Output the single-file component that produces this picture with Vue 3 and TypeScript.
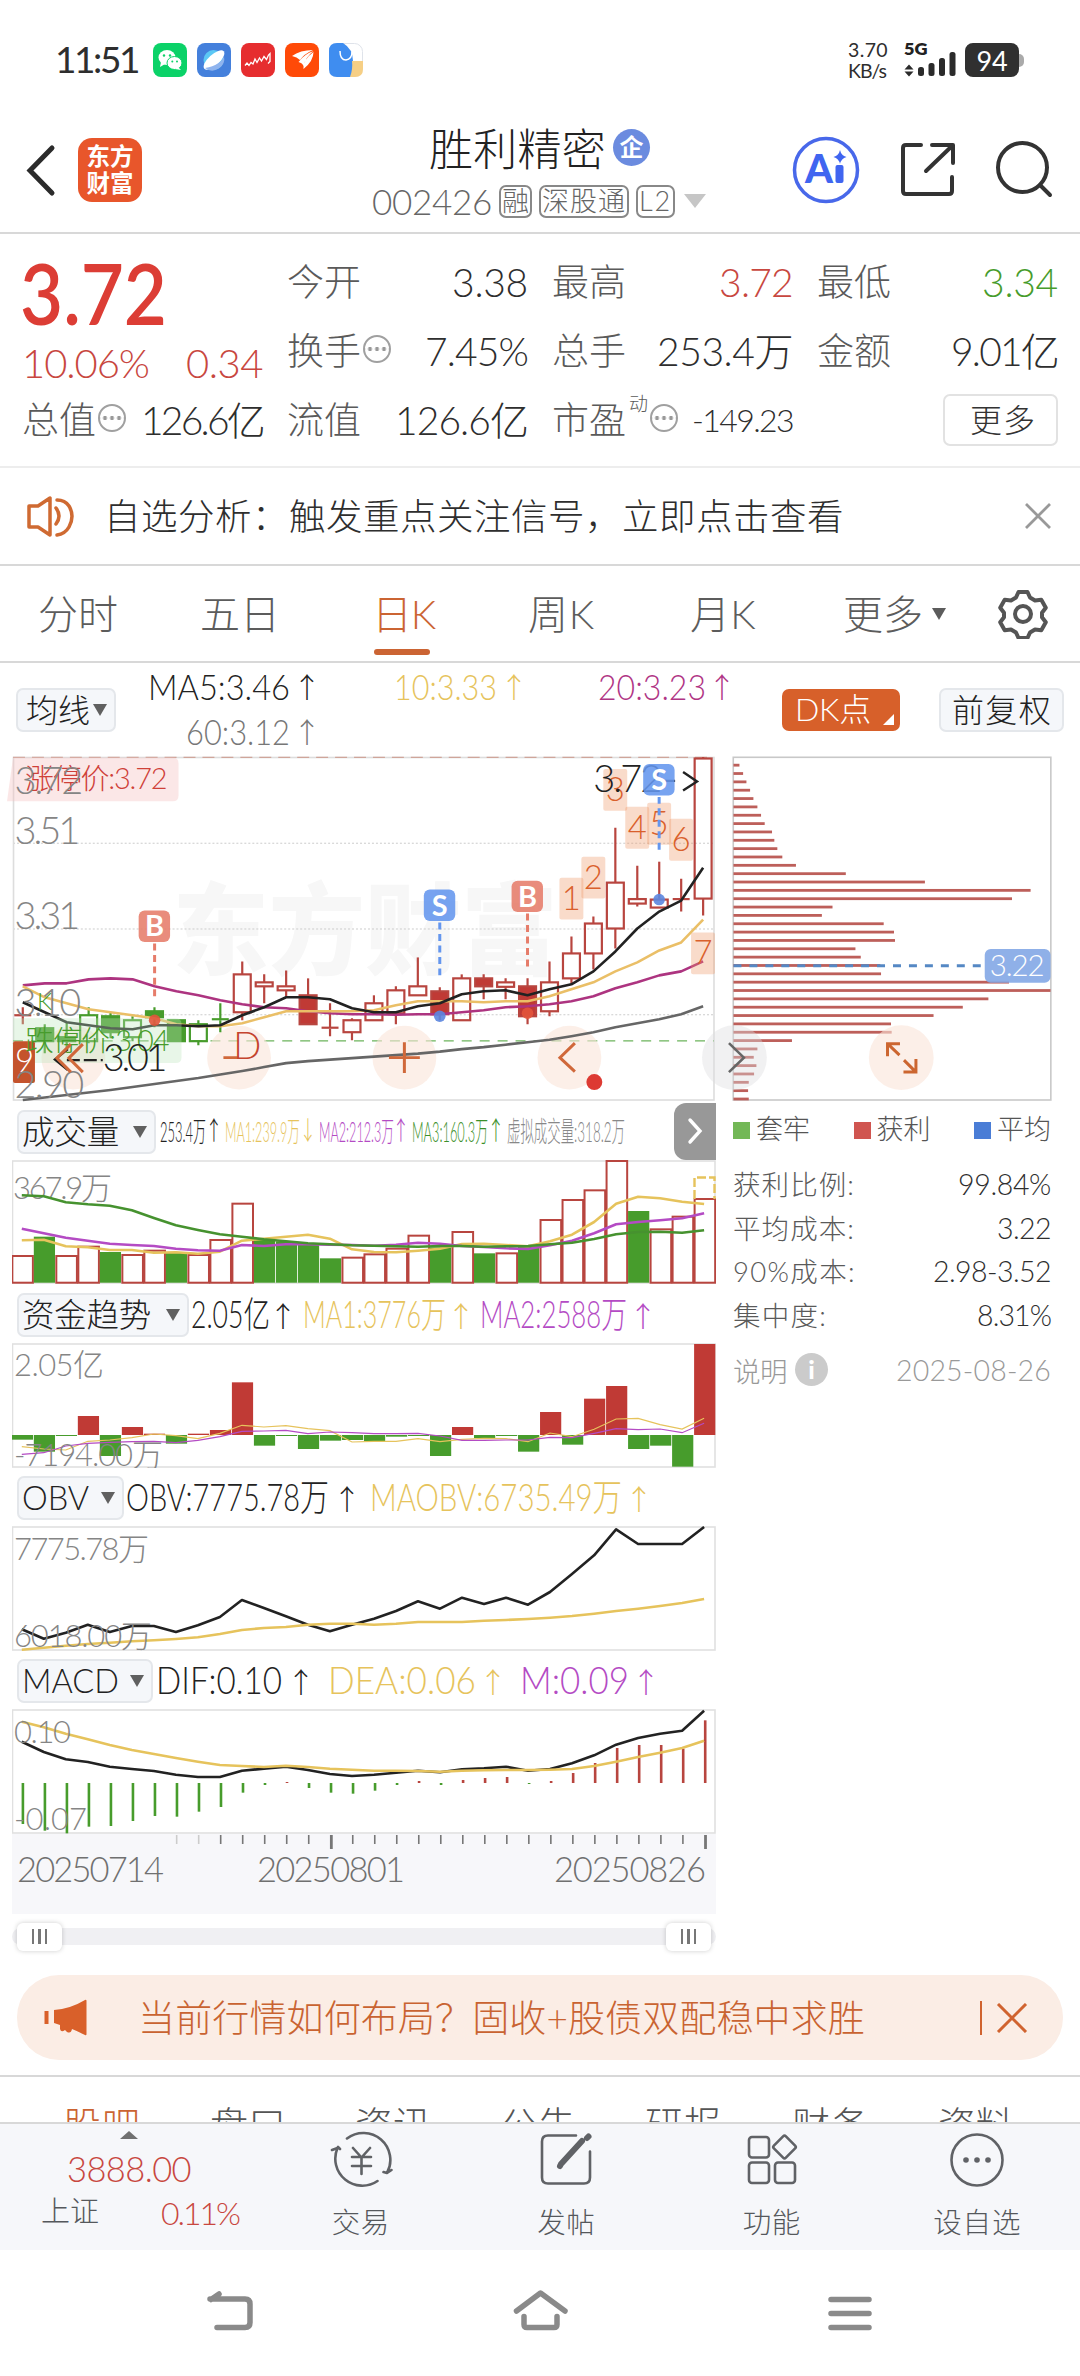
<script setup lang="ts">
import { ref } from 'vue'

/** Spreads the letters of a label so that it fills the given width in px. */
const vFit = {
  mounted(el: HTMLElement, binding: { value: number }) {
    const range = document.createRange()
    range.selectNodeContents(el)
    const natural = range.getBoundingClientRect().width
    const count = Math.max((el.textContent ?? '').trim().length, 1)
    el.style.letterSpacing = `${(binding.value - natural) / count}px`
    el.style.width = `${binding.value}px`
  },
}

const RED = '#b8453f'
const GREEN = '#479c2c'
const YELLOW = '#e6c35c'
const PURPLE = '#b44bc4'

const tabs = [
  { label: '分时', w: 80, left: 38 },
  { label: '五日', w: 80, left: 82 },
  { label: '日K', w: 63, left: 92 },
  { label: '周K', w: 67, left: 93 },
  { label: '月K', w: 66, left: 95 },
]
const activeTab = ref('日K')

const cx = (i: number) => 21.8 + i * 22.01

type Kind = 'r' | 'g' | 'R' | 'G'
// kind, high, body top, body bottom, low (upper case: filled body)
const candles: [Kind, number, number, number, number][] = [
  ['r', 1008, 1016, 1017, 1025], ['G', 1025, 1029, 1042, 1054], ['G', 1023, 1038, 1042, 1048],
  ['g', 1008, 1016, 1042, 1044], ['G', 1013, 1017, 1033, 1039], ['g', 1017, 1021, 1038, 1042],
  ['G', 1008, 1012, 1018, 1028], ['G', 1021, 1021, 1042, 1042], ['g', 1021, 1025, 1042, 1046],
  ['g', 1004, 1020, 1021, 1033], ['r', 962, 975, 1013, 1021], ['r', 975, 983, 987, 1004],
  ['r', 971, 987, 991, 997], ['R', 979, 996, 1025, 1025], ['r', 1004, 1028.5, 1029.5, 1037],
  ['r', 1019, 1021, 1033, 1041], ['r', 996, 1004, 1021, 1021], ['r', 987, 991, 1014, 1025],
  ['r', 958, 987, 996, 996], ['R', 988, 992, 1015, 1021], ['r', 975, 979, 1021, 1021],
  ['R', 975, 979, 987, 1000], ['r', 979, 983, 987.5, 1000], ['R', 979, 987, 1017, 1025],
  ['r', 962, 983, 1012, 1017], ['r', 937, 954, 979, 984], ['r', 917, 924, 954, 970],
  ['r', 828, 883, 929, 949], ['r', 866, 899.5, 904, 907], ['r', 862, 900, 908, 908],
  ['r', 879, 899.5, 900.5, 912], ['r', 757, 758.5, 899, 916],
]
const color = (k: string) => (k.toLowerCase() === 'r' ? RED : GREEN)

const toPoints = (values: number[], base = 0, scale = 1) =>
  values.map((v, i) => `${cx(i).toFixed(1)},${(base + v / scale).toFixed(1)}`).join(' ')

const ma5 = [1003, 1013, 1023, 1026, 1029, 1030, 1026, 1026, 1027, 1026, 1016, 1008, 998, 998, 1000, 1009, 1013, 1013, 1007, 1004, 995, 992, 991, 996, 990, 985, 972, 952, 929, 912, 901, 868]
const ma10 = [987, 998, 1004, 1010, 1013, 1016, 1019, 1025, 1027, 1027, 1024, 1018, 1012, 1012, 1012, 1012, 1011, 1006, 1002, 1002, 1002, 1003, 1002, 1002, 997, 990, 983, 972, 963, 951, 943, 920]
const ma20 = [986, 984, 984, 980, 979, 980, 987, 992, 996, 1001, 1005, 1008, 1009, 1012, 1014, 1015, 1015, 1015.5, 1015, 1015, 1013, 1011, 1008, 1007, 1005, 1002, 997, 989, 983, 976, 972, 962]
const ma60 = [1101, 1098.5, 1096, 1093.5, 1091, 1088, 1085, 1082, 1079, 1075.5, 1072, 1068, 1064, 1062, 1060.5, 1059, 1057.5, 1056, 1054.5, 1052.5, 1050, 1048, 1045.5, 1043, 1040.5, 1037, 1033, 1028, 1024, 1020, 1015, 1007]

const turns = [
  { n: 1, x: 560, y: 878 }, { n: 2, x: 582, y: 857 }, { n: 3, x: 604, y: 769 },
  { n: 4, x: 626, y: 807 }, { n: 5, x: 648, y: 803 }, { n: 6, x: 670, y: 819 }, { n: 7, x: 692, y: 933 },
]
const signals = [
  { t: 'B', x: 138, y: 911, to: 998, dot: 1021 }, { t: 'S', x: 424, y: 890, to: 977, dot: 1017 },
  { t: 'B', x: 512, y: 881, to: 968, dot: 1014 }, { t: 'S', x: 644, y: 764, to: 850, dot: 900 },
]
const sigColor = (t: string) => (t === 'B' ? '#e67c6a' : '#6496ee')

const chips = [117, 128, 138, 149, 159, 171, 182, 193, 215, 222, 231, 246, 287, 437, 675, 993, 937, 397, 365, 551, 582, 585, 466, 482, 541, 543, 928, 1053, 866, 789, 701, 573, 575, 275, 171, 160, 168, 161, 145, 143, 145]
  .map((v, i) => ({ w: (v - 99) / 3, y: 765.3 + i * 8.37 }))

const volKinds = 'rgrrgrrgrrrggggrrrrgrgrgrrrrgrrr'
const volume = [498, 443, 498, 470, 489, 495, 482, 490, 495, 450, 341, 450, 457, 464, 508, 503, 493, 476, 437, 475, 426, 493, 490, 472, 390, 330, 301, 213, 366, 418, 380, 327]
  .map((v, i) => ({ k: volKinds[i], y: 1090 + v / 3 }))
const vol1 = [451, 449, 469, 472, 480, 480, 488, 487, 491, 485, 452, 446, 440, 434, 446, 478, 486, 487, 482, 476, 462, 461, 465, 469, 454, 434, 396, 341, 320, 325, 335, 342]
const vol2 = [416, 430, 443, 452, 461, 465, 468, 476, 481, 482, 465, 468, 463, 463, 464, 465, 467, 464, 458, 461, 468, 471, 475, 477, 466, 452, 430, 403, 396, 391, 385, 370]
const vol3 = [316, 319, 337, 343, 347, 361, 384, 406, 420, 433, 440, 448, 454, 460, 463, 466, 467, 469, 470, 468, 468, 470, 469, 468, 463, 458, 447, 433, 426, 425, 428, 421]

const fund = [1049, 1085, 1038, 978, 1098, 1011, 1031, 1061, 1031, 1020, 877, 1067, 1038, 1077, 1052, 1050, 1053, 1040, 1037, 1098, 1011, 1044, 1038, 1085, 966, 1064, 926, 888, 1077, 1067, 1130, 762]
  .map((v) => ({ up: v < 1035, y: 1090 + Math.min(v, 1035) / 3, h: Math.max(Math.abs(v - 1035) / 3, 1) }))
const fund1 = [1070, 1077, 1080, 1054, 1050, 1043, 1032, 1037, 1046, 1030, 1006, 1011, 1007, 1016, 1022, 1056, 1054, 1054, 1046, 1055, 1048, 1045, 1046, 1055, 1029, 1040, 1018, 987, 985, 1004, 1017, 985]
const fund2 = [1093, 1088, 1068, 1060, 1057, 1055, 1054, 1058, 1051, 1040, 1024, 1023, 1021, 1031, 1026, 1028, 1031, 1031, 1030, 1038, 1051, 1051, 1050, 1050, 1042, 1043, 1030, 1016, 1019, 1017, 1028, 1000]

const obv = [508, 536, 518, 494, 516, 498, 498, 516, 496, 471, 420, 444, 469, 494, 514, 494, 476, 453, 424, 446, 413, 432, 413, 434, 396, 342, 286, 208, 252, 252, 252, 201]
const maobv = [569, 563, 557, 552, 548, 544, 541, 537, 532, 522, 510, 504, 501, 494, 491, 491, 494, 491, 486, 486, 486, 482, 480, 477, 473, 468, 461, 453, 446, 438, 429, 417]

const dif = [155, 186, 208, 216, 230, 237, 243, 254, 261, 261, 242, 236, 230, 240, 252, 258, 254, 248, 242, 247, 238, 235, 230, 242, 237, 220, 196, 164, 144, 131, 122, 62]
const dea = [95, 112, 131, 148, 165, 180, 192, 204, 215, 225, 228, 231, 227, 231, 236, 239, 242, 242, 243, 245, 242, 241, 240, 240, 239, 237, 228, 215, 201, 188, 174, 152]
const macd = [402, 422, 430, 410, 408, 393, 378, 380, 365, 351, 308, 285, 276, 294, 308, 311, 302, 285, 273, 285, 270, 264, 261, 282, 273, 249, 219, 174, 165, 165, 176, 91]

interface LegendItem { t: string; x: number; w: number; c: string; a?: number; down?: boolean }
const mainLegend: (LegendItem & { y: number })[] = [
  { t: 'MA5:3.46', x: 148, w: 142, c: '#222', a: 307, y: 700 },
  { t: '10:3.33', x: 394, w: 103, c: YELLOW, a: 514, y: 700 },
  { t: '20:3.23', x: 598, w: 108, c: '#b03585', a: 722, y: 700 },
  { t: '60:3.12', x: 186, w: 104, c: '#777', a: 307, y: 745 },
]
const volLegend: LegendItem[] = [
  { t: '253.4万', x: 160, w: 46, c: '#222', a: 214 },
  { t: 'MA1:239.9万', x: 225, w: 75, c: YELLOW, a: 308, down: true },
  { t: 'MA2:212.3万', x: 319, w: 75, c: PURPLE, a: 401 },
  { t: 'MA3:160.3万', x: 412, w: 76, c: '#3b8f2a', a: 496 },
  { t: '虚拟成交量:318.2万', x: 507, w: 118, c: '#888' },
]
const fundLegend: LegendItem[] = [
  { t: '2.05亿', x: 191, w: 79, c: '#222', a: 283 },
  { t: 'MA1:3776万', x: 303, w: 143, c: YELLOW, a: 461 },
  { t: 'MA2:2588万', x: 480, w: 147, c: PURPLE, a: 643 },
]
const obvLegend: LegendItem[] = [
  { t: 'OBV:7775.78万', x: 126, w: 203, c: '#222', a: 347 },
  { t: 'MAOBV:6735.49万', x: 370, w: 252, c: YELLOW, a: 639 },
]
const macdLegend: LegendItem[] = [
  { t: 'DIF:0.10', x: 156, w: 126, c: '#222', a: 301 },
  { t: 'DEA:0.06', x: 328, w: 148, c: YELLOW, a: 493 },
  { t: 'M:0.09', x: 520, w: 109, c: PURPLE, a: 646 },
]

const chipStats = [
  { k: '获利比例:', kw: 122, v: '99.84%', vw: 93 },
  { k: '平均成本:', kw: 122, v: '3.22', vw: 54 },
  { k: '90%成本:', kw: 123, v: '2.98-3.52', vw: 118 },
  { k: '集中度:', kw: 94, v: '8.31%', vw: 74 },
]
const sections = [
  { t: '股吧', w: 78 }, { t: '盘口', w: 76 }, { t: '资讯', w: 76 }, { t: '公告', w: 76 },
  { t: '研报', w: 78 }, { t: '财务', w: 77 }, { t: '资料', w: 75 },
]
</script>

<template>
  <div class="screen">
    <div class="status">
      <span v-fit="83" class="clock">11:51</span>
      <div class="apps">
        <svg viewBox="0 0 34 34"><rect width="34" height="34" rx="8" fill="#0bd268" /><ellipse cx="14" cy="14.5" rx="8.5" ry="7.5" fill="#fff" /><path d="M8 19l-1 5 5-3z" fill="#fff" /><ellipse cx="21.5" cy="20" rx="7.5" ry="6.5" fill="#fff" stroke="#0bd268" /><path d="M25 24l3 3-6-1z" fill="#fff" /><g fill="#0bd268"><circle cx="11" cy="12.5" r="1.2" /><circle cx="17" cy="12.5" r="1.2" /><circle cx="19.300" cy="18.500" r="1" /><circle cx="24" cy="18.500" r="1" /></g></svg>
        <svg viewBox="0 0 34 34"><rect width="34" height="34" rx="8" fill="#4480dc" /><circle cx="16.500" cy="17" r="10" fill="#5cc8f5" /><ellipse cx="17" cy="17" rx="13" ry="5.500" fill="#fff" transform="rotate(-42 17 17)" /><path d="M8 25a12 12 0 0 0 19-12q-3 9-19 12z" fill="#8fb4ee" /></svg>
        <svg viewBox="0 0 34 34"><rect width="34" height="34" rx="8" fill="#e62d2f" /><path d="M4 22.500l2-2.500 2 2.500 2-3 2 1.500 2-5 2 3.500 2.500-4.500 2 3 2.500-4.500 2.500 3 2-4.500 1.500-1.500v8l-2 2" fill="none" stroke="#fff" stroke-width="1.300" /></svg>
        <svg viewBox="0 0 34 34"><rect width="34" height="34" rx="8" fill="#ff4a08" /><path d="M7 13q8-6 21-6-9 4-13 10-3-3-8-4zM13.500 19q6-8 15-11-8 6-10 15-1-3-5-4zM18.500 26q-1-9 10-17 0 9-10 17z" fill="#fff" /></svg>
        <svg viewBox="0 0 34 34"><rect width="33" height="33" x=".5" y=".5" rx="8" fill="#fff" stroke="#dfe3ea" /><path d="M8 0h6q10 6 10 18v16H8q-8 0-8-8V8q0-8 8-8z" fill="#3f8df0" /><path d="M23 18h11v8q0 8-8 8h-5q3-8 2-16z" fill="#f6cf85" /><path d="M11 8q0 9 6 9 6-1 6-8" fill="none" stroke="#fff" stroke-width="1.500" /></svg>
      </div>
      <div class="rate"><span v-fit="40">3.70</span><span v-fit="38">KB/s</span></div>
      <svg class="signal" viewBox="903 40 54 40"><text x="904" y="54.500" font-size="17" font-weight="800" textLength="23.500" lengthAdjust="spacingAndGlyphs" fill="#222">5G</text><path d="M904.500 69.500l4.500-5 4.500 5zM904.500 71.500l4.500 5 4.500-5z" fill="#2b2b2b" /><g fill="#2b2b2b"><rect x="918" y="67" width="6" height="9" rx="2.500" /><rect x="928.500" y="63" width="6" height="13" rx="2.500" /><rect x="939" y="58" width="6" height="18" rx="2.500" /><rect x="949.500" y="52" width="6" height="24" rx="2.500" /></g></svg>
      <div class="battery"><span v-fit="31">94</span></div><i class="nub" />
    </div>

    <header class="header">
      <svg class="back" viewBox="26 144 30 53"><path d="M52 148L30 170.500 52 193" fill="none" stroke="#2b2b2b" stroke-width="5" stroke-linecap="round" /></svg>
      <div class="logo"><span>东方</span><span>财富</span></div>
      <div class="title">
        <div class="name"><span v-fit="177">胜利精密</span><b>企</b></div>
        <div class="code"><span v-fit="120">002426</span><em v-fit="27">融</em><em v-fit="84">深股通</em><em v-fit="33">L2</em><i /></div>
      </div>
      <svg class="ai" viewBox="790 135 72 70"><circle cx="826" cy="170" r="31.500" fill="#fff" stroke="#4868ea" stroke-width="3.500" /><text x="805" y="183" font-size="40" font-weight="900" textLength="28" lengthAdjust="spacingAndGlyphs" fill="#4065f0">A</text><rect x="835.500" y="165" width="8" height="18" rx="2" fill="#4065f0" /><path d="M840 150q1.200 5.500 6.500 7-5.300 1.500-6.500 7-1.200-5.500-6.500-7 5.300-1.500 6.500-7z" fill="#4065f0" /></svg>
      <svg class="share" viewBox="898 140 60 60" fill="none" stroke="#333" stroke-width="4" stroke-linecap="round" stroke-linejoin="round"><path d="M921 145h-15q-3 0-3 3v43q0 3 3 3h43q3 0 3-3v-14M932 145h21v18M952 146l-26 25" /></svg>
      <svg class="search" viewBox="992 138 62 62" fill="none" stroke="#333" stroke-width="4" stroke-linecap="round"><circle cx="1022.500" cy="167.500" r="24.500" /><path d="M1040 185l10 10" /></svg>
    </header>

    <section class="quote">
      <div class="qcol">
        <svg class="price" viewBox="22 247 240 95"><text x="20" y="325" font-size="85" font-weight="600" textLength="147" lengthAdjust="spacingAndGlyphs">3.72</text></svg>
        <div class="change"><span v-fit="127">10.06%</span><span v-fit="77">0.34</span></div>
        <div class="qrow"><label>总值<i class="dots" /></label><span v-fit="122">126.6亿</span></div>
      </div>
      <div class="qcol">
        <div class="qrow"><label>今开</label><span v-fit="76">3.38</span></div>
        <div class="qrow"><label>换手<i class="dots" /></label><span v-fit="103">7.45%</span></div>
        <div class="qrow"><label>流值</label><span v-fit="133">126.6亿</span></div>
      </div>
      <div class="qcol">
        <div class="qrow"><label>最高</label><span v-fit="74" class="up">3.72</span></div>
        <div class="qrow"><label>总手</label><span v-fit="136">253.4万</span></div>
        <div class="qrow"><label>市盈<sup>动</sup><i class="dots" /></label><span v-fit="101" class="small">-149.23</span></div>
      </div>
      <div class="qcol">
        <div class="qrow"><label>最低</label><span v-fit="76" class="down">3.34</span></div>
        <div class="qrow"><label>金额</label><span v-fit="107">9.01亿</span></div>
        <div class="qrow"><button v-fit="66" class="more">更多</button></div>
      </div>
    </section>

    <section class="notice">
      <svg viewBox="26 494 52 43" fill="none" stroke="#cf6a32" stroke-width="3.500" stroke-linejoin="round" stroke-linecap="round"><path d="M29 505h9l12-8v37l-12-8h-9z" /><path d="M56 507q6 8 0 16M57 499q8 0 12 6 6 10 0 21-4 7-12 8" /></svg>
      <span v-fit="740">自选分析：触发重点关注信号，立即点击查看</span>
      <svg class="x" viewBox="0 0 28 28"><path d="M2 2l24 24M26 2L2 26" stroke="#999" stroke-width="2.800" /></svg>
    </section>

    <nav class="tabs">
      <a v-for="t in tabs" :key="t.label" :class="{ on: t.label === activeTab }" :style="{ marginLeft: t.left + 'px' }" @click="activeTab = t.label"><span v-fit="t.w">{{ t.label }}</span></a>
      <a class="tmore"><span v-fit="80">更多</span><i /></a>
      <svg viewBox="-25 -25 50 50" fill="none" stroke="#555" stroke-width="4" stroke-linejoin="round"><path d="M-4.500 -22h9l2.500 5.500 5 3 6.300-.8 4.500 8-3.800 5v4.600l3.800 5-4.500 8-6.300-.8-5 3-2.500 5.500h-9l-2.500-5.500-5-3-6.300.8-4.500-8 3.800-5v-4.600l-3.800-5 4.500-8 6.300.8 5-3z" /><circle r="8" /></svg>
    </nav>

    <section class="ma">
      <div class="pill"><span v-fit="64">均线</span><i /></div>
      <svg viewBox="116 663 660 94"><g v-for="l in mainLegend" :key="l.t" :fill="l.c" font-size="34.500"><text :x="l.x" :y="l.y" :textLength="l.w" lengthAdjust="spacingAndGlyphs">{{ l.t }}</text><text class="arrow" :x="l.a" :y="l.y - 2" text-anchor="middle">↑</text></g></svg>
      <div class="dk"><span v-fit="76">DK点</span><i /></div>
      <div class="pill fq"><span v-fit="100">前复权</span></div>
    </section>

    <div class="charts">
      <div class="left">
        <svg class="panel main" viewBox="12 756 704 346">
          <text class="mark" x="172" y="968" font-size="100" textLength="386" lengthAdjust="spacingAndGlyphs">东方财富</text>
          <g stroke="#ccc" stroke-dasharray="2 2"><path d="M12 843.500h703M12 929.500h703M12 1015.500h703" /></g>
          <rect x="12.500" y="757.500" width="702.500" height="343.500" fill="none" stroke="#ddd" stroke-width="1.600" />
          <path d="M12 757.300h703" stroke="#cfa59a" stroke-width="1.300" stroke-dasharray="12 7" />
          <path d="M12 1041.700h703" stroke="#6cb45c" stroke-width="1.400" stroke-dasharray="10 8" />
          <g class="fab"><circle cx="72.500" cy="1058.500" r="32" /><circle cx="238.700" cy="1058.500" r="32" /><circle cx="404.500" cy="1058.500" r="32" /><circle cx="570" cy="1058.500" r="32" /></g>
          <g v-for="(c, i) in candles" :key="i" :stroke="color(c[0])" stroke-width="2.200">
            <path :d="`M${cx(i)} ${c[1]}V${c[2]}M${cx(i)} ${c[3]}V${c[4]}`" />
            <path v-if="c[3] - c[2] < 2" :d="`M${cx(i) - 8.500} ${c[2]}h17`" />
            <rect v-else :x="cx(i) - 8.500" :y="c[2]" width="17" :height="c[3] - c[2]" :fill="c[0] === 'R' ? '#c03a35' : c[0] === 'G' ? GREEN : 'none'" />
          </g>
          <g fill="none" stroke-width="2.600" stroke-linejoin="round">
            <polyline :points="toPoints(ma60)" stroke="#666" /><polyline :points="toPoints(ma20)" stroke="#ad3480" />
            <polyline :points="toPoints(ma10)" stroke="#eabf67" /><polyline :points="toPoints(ma5)" stroke="#222" />
          </g>
          <path d="M12 757.500h160q6 0 6 6v32q0 6-6 6h-166z" fill="rgba(245,195,195,.4)" />
          <path d="M12 1019h163q6 0 6 6v33q0 6-6 6h-163z" fill="rgba(190,230,190,.35)" />
          <rect x="12" y="1042" width="22" height="42" rx="2" fill="#c4532c" /><text x="14" y="1073" font-size="33" fill="#fff">9</text>
          <text x="36" y="1011" font-size="24" :fill="GREEN">K</text>
          <text x="24" y="789.500" font-size="29" fill="#cf4038" textLength="143">涨停价:3.72</text>
          <text x="24" y="1051.500" font-size="29" :fill="GREEN" textLength="145">跌停价:3.04</text>
          <g fill="#858585" font-size="38"><text x="13.500" y="794" textLength="69">3.72</text><text x="13.500" y="844" textLength="66">3.51</text><text x="13.500" y="930" textLength="66">3.31</text><text x="13.500" y="1017" textLength="67">3.10</text><text x="13.500" y="1099.500" textLength="70">2.90</text></g>
          <path d="M67 1050l-13 10.500 13 10.500" fill="none" stroke="#222" stroke-width="2.400" /><path d="M66 1061h36" stroke="#222" stroke-width="2.400" stroke-dasharray="13 4" />
          <text x="102" y="1072" font-size="38" fill="#222" textLength="65">3.01</text>
          <g class="ink"><path d="M70 1045l-14 14 14 14M82 1045l-14 14 14 14M223 1058.500h15M389 1058.500h31M404.500 1043v31M575.500 1044l-15 14.500 15 14" /></g>
          <text x="233" y="1060" font-size="37" fill="#c4442e">D</text>
          <circle cx="595" cy="1083" r="8" fill="#dd3a33" />
          <g v-for="t in turns" :key="t.n"><rect :x="t.x" :y="t.y" width="24" height="42" rx="2" fill="rgba(238,150,100,.34)" /><text :x="t.x + 12" :y="t.y + 32" font-size="33" fill="#d9602c" text-anchor="middle">{{ t.n }}</text></g>
          <text x="594" y="792" font-size="38" fill="#222" textLength="69">3.72</text><path d="M664 781h12M684 772l14 9.500-14 9" fill="none" stroke="#222" stroke-width="2.400" />
          <g v-for="s in signals" :key="s.x">
            <path :d="`M${s.x + 16} ${s.y + 33}V${s.to}`" :stroke="sigColor(s.t)" stroke-width="3" stroke-dasharray="7 4.500" />
            <circle :cx="s.x + 16" :cy="s.dot" r="5.800" :fill="s.t === 'B' ? '#e2553c' : '#5b86df'" fill-opacity=".9" />
            <rect :x="s.x" :y="s.y" width="31.500" height="31.500" rx="6" :fill="sigColor(s.t)" fill-opacity=".88" />
            <text :x="s.x + 16" :y="s.y + 26" class="sig" text-anchor="middle">{{ s.t }}</text>
          </g>
          <g><circle cx="735.500" cy="1058.500" r="32.500" fill="rgba(220,220,222,.4)" /><path d="M730 1044l15 14.500-15 14.500" fill="none" stroke="#666" stroke-width="2.600" /></g>
        </svg>

        <div class="bar">
          <div class="pill ind w1"><span v-fit="97">成交量</span><i /></div>
          <svg viewBox="156 1101 518 59"><g v-for="l in volLegend" :key="l.t" :fill="l.c" font-size="28"><text :x="l.x" y="1142" :textLength="l.w" lengthAdjust="spacingAndGlyphs">{{ l.t }}</text><text v-if="l.a" class="arrow" x="0" y="0" text-anchor="middle" :transform="`translate(${l.a} 1140) scale(.6 .92)`">{{ l.down ? '↓' : '↑' }}</text></g></svg>
          <button class="next"><svg viewBox="0 0 16 28"><path d="M3 3l10 11L3 25" fill="none" stroke="#fff" stroke-width="3.400" stroke-linecap="round" /></svg></button>
        </div>
        <svg class="panel volume" viewBox="12 1160 704 124">
          <rect x="12.500" y="1161" width="702.500" height="122" class="frame" />
          <text class="axis" x="13" y="1198.500" font-size="31" textLength="99">367.9万</text>
          <template v-for="(v, i) in volume" :key="i">
            <rect v-if="v.k === 'r'" :x="cx(i) - 9.500" :y="v.y" width="20.600" :height="1282.700 - v.y" fill="none" :stroke="RED" stroke-width="2" />
            <rect v-else :x="cx(i) - 10" :y="v.y - 1" width="21.200" :height="1283.700 - v.y" :fill="GREEN" />
          </template>
          <path d="M694.500 1199v-21.500h20V1199" fill="none" :stroke="YELLOW" stroke-width="2.400" stroke-dasharray="9 3" />
          <g fill="none" stroke-width="2.600" stroke-linejoin="round"><polyline :points="toPoints(vol1, 1090, 3)" :stroke="YELLOW" /><polyline :points="toPoints(vol2, 1090, 3)" :stroke="PURPLE" /><polyline :points="toPoints(vol3, 1090, 3)" stroke="#46922f" /></g>
        </svg>

        <div class="bar">
          <div class="pill ind w2"><span v-fit="129">资金趋势</span><i /></div>
          <svg viewBox="189 1284 527 59"><g v-for="l in fundLegend" :key="l.t" :fill="l.c" font-size="36.500"><text :x="l.x" y="1327.500" :textLength="l.w" lengthAdjust="spacingAndGlyphs">{{ l.t }}</text><text class="arrow" :x="l.a" y="1327" text-anchor="middle">↑</text></g></svg>
        </div>
        <svg class="panel" viewBox="12 1343 704 125">
          <rect x="12.500" y="1344" width="702.500" height="123" class="frame" />
          <rect v-for="(f, i) in fund" :key="i" :x="cx(i) - 10" :y="f.y" width="21.200" :height="f.h" :fill="f.up ? '#c03a35' : GREEN" />
          <g fill="none" stroke-width="1.200"><polyline :points="toPoints(fund1, 1090, 3)" :stroke="YELLOW" /><polyline :points="toPoints(fund2, 1090, 3)" :stroke="PURPLE" /></g>
          <text class="axis" x="14" y="1376" font-size="31" textLength="90">2.05亿</text><text class="axis" x="14" y="1466" font-size="31" textLength="149">-7194.00万</text>
        </svg>

        <div class="bar b3">
          <div class="pill ind w3"><span v-fit="67">OBV</span><i /></div>
          <svg viewBox="124 1468 592 58"><g v-for="l in obvLegend" :key="l.t" :fill="l.c" font-size="37"><text :x="l.x" y="1510.500" :textLength="l.w" lengthAdjust="spacingAndGlyphs">{{ l.t }}</text><text class="arrow" :x="l.a" y="1510" text-anchor="middle">↑</text></g></svg>
        </div>
        <svg class="panel" viewBox="12 1526 704 125">
          <rect x="12.500" y="1527" width="702.500" height="123" class="frame" />
          <g fill="none" stroke-width="2.600" stroke-linejoin="round"><polyline :points="toPoints(obv, 1460, 3)" stroke="#222" /><polyline :points="toPoints(maobv, 1460, 3)" :stroke="YELLOW" /></g>
          <text class="axis" x="14" y="1559.500" font-size="31" textLength="135">7775.78万</text><text class="axis" x="14" y="1647" font-size="31" textLength="138">6018.00万</text>
        </svg>

        <div class="bar b3">
          <div class="pill ind w4"><span v-fit="97">MACD</span><i /></div>
          <svg viewBox="153 1651 563 58"><g v-for="l in macdLegend" :key="l.t" :fill="l.c" font-size="37"><text :x="l.x" y="1693.500" :textLength="l.w" lengthAdjust="spacingAndGlyphs">{{ l.t }}</text><text class="arrow" :x="l.a" y="1693" text-anchor="middle">↑</text></g></svg>
        </div>
        <svg class="panel" viewBox="12 1709 704 125">
          <rect x="12.500" y="1710" width="702.500" height="123" class="frame" />
          <rect v-for="(m, i) in macd" :key="i" :x="cx(i) - 0.200" :y="1690 + Math.min(m, 279) / 3" width="2.600" :height="Math.max(Math.abs(m - 279) / 3, 0.600)" :fill="m < 279 ? RED : GREEN" />
          <g fill="none" stroke-width="2.600" stroke-linejoin="round"><polyline :points="toPoints(dif, 1690, 3)" stroke="#222" /><polyline :points="toPoints(dea, 1690, 3)" :stroke="YELLOW" /></g>
          <text class="axis" x="14" y="1743" font-size="31" textLength="57">0.10</text><text class="axis" x="14" y="1830" font-size="31" textLength="73">-0.07</text>
        </svg>
        <svg class="panel dates" viewBox="12 1834 704 80">
          <rect x="12" y="1834" width="704" height="80" fill="#f7f7fa" />
          <rect v-for="i in 25" :key="i" :x="cx(i + 6)" y="1835" :width="i === 8 || i === 25 ? 2.800 : 1.600" :height="i === 8 || i === 25 ? 14 : 9" :fill="i < 3 ? '#ccc' : '#777'" />
          <g fill="#707070" font-size="34.500"><text x="17" y="1882" textLength="147">20250714</text><text x="257" y="1882" textLength="148">20250801</text><text x="554" y="1882" textLength="152">20250826</text></g>
        </svg>
        <div class="slider"><div class="knob"><i /><i /><i /></div><div class="knob"><i /><i /><i /></div></div>
      </div>

      <aside class="right">
        <svg class="chip" viewBox="732 756 322 346">
          <rect x="732.800" y="757.300" width="318.500" height="343.700" fill="none" stroke="#c8c8c8" stroke-width="1.600" />
          <rect v-for="(c, i) in chips" :key="i" x="733" :y="c.y - 1.500" :width="c.w" height="2.800" fill="#bd5f5a" />
          <path d="M733 966.400h248" stroke="#5588c4" stroke-width="3" stroke-dasharray="8 8" />
          <rect x="985" y="949.500" width="66" height="34" rx="6" fill="#87aae6" fill-opacity=".93" /><text x="990" y="977" font-size="29.500" fill="#fff" textLength="55">3.22</text>
          <circle cx="901.300" cy="1058.500" r="32.500" fill="#fae5d9" fill-opacity=".6" /><path d="M900 1044.500h-12.500v12.500M888 1045l11.500 11M903.500 1073H916v-13M915.500 1072.500L904 1061" fill="none" stroke="#cc6630" stroke-width="3" />
        </svg>
        <div class="keys"><span><i class="k1" /><u v-fit="54">套牢</u></span><span><i class="k2" /><u v-fit="54">获利</u></span><span><i class="k3" /><u v-fit="54">平均</u></span></div>
        <div v-for="s in chipStats" :key="s.k" class="stat"><span v-fit="s.kw">{{ s.k }}</span><b v-fit="s.vw">{{ s.v }}</b></div>
        <div class="note"><span v-fit="54">说明</span><i>i</i><b v-fit="155">2025-08-26</b></div>
      </aside>
    </div>

    <section class="banner">
      <svg viewBox="44 1998 44 40" fill="#d9602a"><path d="M44.500 2011h4v13h-4zM54 2010q16-1 31-10q1.500-1 1.500 1v33q0 2-1.500 1-8-4-13-6-1 5-5 3l-2-2q-4 3-5-1v-4l-6-2z" /></svg>
      <span v-fit="727">当前行情如何布局？固收+股债双配稳中求胜</span><i />
      <svg class="bx" viewBox="0 0 32 30"><path d="M2 1l28 28M30 1L2 29" stroke="#d0632f" stroke-width="3" /></svg>
    </section>

    <div class="sections"><span v-for="(s, i) in sections" :key="s.t" v-fit="s.w" :class="{ hot: i === 0 }">{{ s.t }}</span></div>

    <footer class="dock">
      <div class="index"><i /><span v-fit="124">3888.00</span><p><em v-fit="58">上证</em><b v-fit="78">0.11%</b></p></div>
      <div class="act"><svg viewBox="328 2129 64 62"><path d="M346 2138.500a27 27 0 0 1 40 34.500l4.500-3M386 2173l-3.500-1M376.500 2181a27 27 0 0 1-40-33l-5.500 2M337 2147l2 2M352 2148l8.500 9.500 8.500-9.500M351 2157h19M351 2166h19M360.500 2157v17" /></svg><span v-fit="58">交易</span></div>
      <div class="act"><svg viewBox="534 2129 64 62"><path d="M576 2135.500h-28q-6 0-6 6v36q0 6 6 6h36q6 0 6-6v-26" /><path d="M560 2166l1-2 21-23M587 2138l1.500-1.500" stroke-width="6" /></svg><span v-fit="58">发帖</span></div>
      <div class="act"><svg viewBox="739 2129 64 62"><rect x="748" y="2137" width="20" height="20.500" rx="3" /><rect x="748" y="2162.500" width="20" height="20.500" rx="3" /><rect x="774" y="2162.500" width="20" height="20.500" rx="3" /><rect x="775" y="2138.500" width="17" height="17" rx="2" transform="rotate(45 783.500 2147)" /></svg><span v-fit="58">功能</span></div>
      <div class="act"><svg viewBox="945 2129 64 62"><circle cx="977" cy="2160" r="25.500" /><g fill="#606266" stroke="none"><circle cx="966" cy="2160" r="2.800" /><circle cx="977" cy="2160" r="2.800" /><circle cx="988" cy="2160" r="2.800" /></g></svg><span v-fit="88">设自选</span></div>
    </footer>

    <div class="sysnav">
      <svg viewBox="204 2286 52 48"><path d="M217 2327.500h28q5 0 5-5v-18.500q0-5-5-5h-35M219 2294l-8 5.500" /></svg>
      <svg viewBox="511 2286 60 48"><path d="M516.500 2311L540.500 2293l24.500 18M524 2316.500v8q0 3 3 3h27q3 0 3-3v-8" /></svg>
      <svg viewBox="824 2286 52 48"><path d="M831 2299.500h38M831 2313.500h38M831 2327.500h38" /></svg>
    </div>
  </div>
</template>

<style>
body { background: #fff; overflow: hidden; }
</style>

<style scoped>
.screen { width: 1080px; height: 2376px; overflow: hidden; display: flex; flex-direction: column; background: #fff; color: #2e2e2e; font-family: Lato, "Noto Sans CJK SC", sans-serif; font-weight: 400; box-sizing: border-box; }
.screen * { box-sizing: border-box; }
.screen > * { flex-shrink: 0; }
span, em, b, u, label, button { white-space: nowrap; font-style: normal; text-decoration: none; font-weight: inherit; }
svg { display: block; flex-shrink: 0; }
svg text { font-family: Lato, "Noto Sans CJK SC", sans-serif; }
i { font-style: normal; flex-shrink: 0; }

.status { height: 120px; display: flex; align-items: center; padding-left: 55px; }
.clock { font-size: 37px; margin-top: -3px; }
.apps { display: flex; gap: 10px; margin-left: 15px; width: 210px; }
.apps svg { width: 34px; height: 34px; }
.rate { margin-left: 485px; width: 40px; display: flex; flex-direction: column; font-size: 19.500px; line-height: 21px; }
.signal { width: 54px; height: 40px; margin-left: 15px; }
.battery { margin-left: 8px; width: 54px; height: 34px; border-radius: 8px; background: #303030; color: #fff; display: flex; align-items: center; justify-content: center; font-size: 27px; }
.nub { width: 5px; height: 13px; background: #aaa; border-radius: 0 5px 5px 0; }

.header { height: 114px; border-bottom: 2px solid #d8d8d8; display: flex; padding-left: 26px; }
.back { width: 30px; height: 53px; margin-top: 24px; }
.logo { width: 64px; height: 64px; margin: 18px 0 0 22px; border-radius: 14px; background: #e8562b; color: #fff; display: flex; flex-direction: column; align-items: center; justify-content: center; font-weight: 700; font-size: 23.500px; line-height: 27px; }
.title { width: 332px; margin-left: 230px; }
.name { display: flex; align-items: center; height: 54px; padding-left: 57px; font-size: 44px; font-weight: 300; color: #222; }
.name b { width: 37px; height: 37px; border-radius: 50%; margin: 1px 0 0 7px; background: #6b8bdf; color: #fff; font-size: 24px; line-height: 35px; text-align: center; font-weight: 700; }
.code { display: flex; align-items: center; height: 54px; font-size: 35px; font-weight: 300; color: #666; }
.code em { border: 2px solid #888; border-radius: 7px; line-height: 27px; font-size: 27px; box-sizing: content-box; height: 29px; padding: 0 1px; margin-left: 7px; }
.code i { margin-left: 9px; border: 11px solid transparent; border-top: 14px solid #c6c6c6; border-bottom: 0; }
.ai { width: 72px; height: 70px; margin: 15px 0 0 86px; }
.share { width: 60px; height: 60px; margin: 20px 0 0 36px; }
.search { width: 62px; height: 62px; margin: 18px 0 0 34px; }

.quote { height: 234px; padding: 13px 22px 0; display: flex; gap: 24px; border-bottom: 2px solid #ededed; }
.qcol { width: 241px; }
.price { width: 240px; height: 95px; fill: #dc3d35; }
.change { height: 43px; line-height: 43px; display: flex; justify-content: space-between; font-size: 40px; color: #c8473f; font-weight: 300; }
.qrow { height: 69px; display: flex; align-items: center; justify-content: space-between; font-size: 39px; line-height: 50px; font-weight: 300; }
.qrow label { font-size: 37px; color: #5a5a5a; display: flex; align-items: center; }
.dots { width: 28px; height: 28px; margin-top: -3px; border: 2px solid #a0a0a0; border-radius: 50%; margin-left: 2px; background: radial-gradient(circle, #999 1.800px, transparent 2.200px) 0 0 / 7px 24px repeat-x; background-clip: padding-box; background-position: 1.500px 0; }
.qrow sup { font-size: 19px; line-height: 20px; align-self: flex-start; margin: -1px 0 0 3px; }
.up { color: #c8473f; } .down { color: #479c2c; } .small { font-size: 32px; }
.more { box-sizing: content-box; margin-left: auto; height: 48px; padding: 0 20px 0 25px; border: 2px solid #e2e2e2; border-radius: 7px; background: #fff; color: #333; font: 300 32px/46px Lato, "Noto Sans CJK SC", sans-serif; text-align: left; }

.notice { height: 98px; border-bottom: 2px solid #d8d8d8; display: flex; align-items: center; padding-left: 26px; font-size: 36.500px; font-weight: 300; }
.notice svg { width: 52px; height: 43px; margin-right: 26px; }
.notice span { margin-top: -3px; }
.notice svg.x { width: 28px; height: 28px; margin: 0 0 0 180px; }

.tabs { height: 97px; border-bottom: 2px solid #d8d8d8; display: flex; align-items: center; font-size: 40px; font-weight: 300; color: #5c5c5c; }
.tabs a { height: 96px; line-height: 98px; position: relative; display: flex; align-items: center; }
.tabs .on { color: #cb6433; }
.tabs .on::after { content: ""; position: absolute; left: 2px; width: 56px; bottom: 7px; height: 6px; border-radius: 3px; background: #cb6433; }
.tmore { margin-left: 87px; }
.tmore i { border: 7px solid transparent; border-top: 12px solid #5c5c5c; border-bottom: 0; margin-left: 9px; }
.tabs svg { width: 50px; height: 50px; margin-left: 52px; }

.ma { height: 93px; display: flex; align-items: center; padding-left: 16px; }
.ma > svg { width: 660px; height: 94px; font-weight: 300; }
.pill { width: 100px; height: 44px; border: 2px solid #e4e7eb; border-radius: 7px; background: #f5f7fa; display: flex; align-items: center; padding-left: 8px; font-size: 32px; line-height: 40px; font-weight: 300; color: #222; }
.pill i { border: 7px solid transparent; border-top: 12px solid #606060; border-bottom: 0; margin-left: 3px; }
.fq { width: 125px; padding-left: 11px; margin-left: 39px; }
.dk { margin-left: 6px; width: 118px; height: 42px; border-radius: 7px; background: #d7602a; color: #fff; display: flex; font-size: 32px; line-height: 40px; padding-left: 13px; font-weight: 300; }
.dk i { border-left: 11px solid transparent; border-bottom: 11px solid #fff; align-self: flex-end; margin: 0 0 6px 12px; }
.arrow { font-family: "Noto Sans CJK SC", sans-serif; font-size: 28px; }

.charts { display: flex; padding-left: 12px; height: 1219px; font-weight: 300; }
.left { width: 704px; }
.panel { width: 704px; height: 125px; }
.main { height: 345px; overflow: visible; position: relative; z-index: 1; }
.volume { height: 124px; }
.mark { fill: #f7f7f7; font-weight: 900; }
.frame { fill: none; stroke: #e0e0e0; stroke-width: 1.600; }
.axis { fill: #858585; }
.fab { fill: #fae5d9; fill-opacity: .6; }
.ink { fill: none; stroke: #d0683a; stroke-width: 3; }
.sig { font-size: 29px; font-weight: 700; fill: #fff; }
.bar { height: 59px; display: flex; align-items: center; padding-left: 5px; }
.bar > svg { height: 59px; width: auto; }
.b3, .b3 > svg { height: 58px; }
.ind { padding: 0 7px 0 3px; justify-content: space-between; position: relative; top: 1px; }
.bar .ind span { font-size: 32.500px; }
.w1 { width: 139px; } .w2 { width: 172px; } .w3 { width: 107px; } .w4 { width: 136px; }
.next { width: 42px; height: 57px; border: 0; padding: 0; margin-top: 1px; border-radius: 12px 0 0 12px; background: #989898; display: flex; align-items: center; justify-content: center; }
.next svg { width: 16px; height: 28px; }
.dates { height: 80px; }
.slider { margin-top: 14px; height: 17px; border-radius: 9px; background: #f0f0f3; display: flex; justify-content: space-between; align-items: center; padding: 0 5px; }
.knob { width: 45px; height: 28px; border-radius: 6px; background: #fff; box-shadow: 0 0 5px rgba(0, 0, 0, .2); display: flex; align-items: center; justify-content: center; gap: 4px; }
.knob i { width: 2.500px; height: 15px; background: #777; }

.right { margin-left: 16px; width: 322px; }
.chip { width: 322px; height: 345px; }
.keys { height: 58px; display: flex; justify-content: space-between; padding: 0 3px 0 1px; font-size: 27px; color: #555; line-height: 40px; }
.keys span { display: flex; align-items: center; gap: 6px; }
.keys u { margin-top: -2px; }
.keys i { width: 17px; height: 17px; }
.k1 { background: #73b857; } .k2 { background: #d05550; } .k3 { background: #4a7dd6; }
.stat { height: 43.700px; line-height: 51px; display: flex; justify-content: space-between; padding: 0 3px 0 1px; font-size: 27.500px; color: #5a5a5a; }
.stat b { color: #2e2e2e; font-size: 28.500px; }
.note { margin-top: 12px; height: 48px; display: flex; align-items: center; padding: 0 3px 0 1px; color: #999; font-size: 27.500px; }
.note i { width: 33px; height: 33px; border-radius: 50%; background: #cbcbcb; color: #fff; text-align: center; line-height: 32px; font-size: 25px; font-weight: 900; margin-left: 8px; }
.note b { margin-left: auto; font-size: 28.500px; }

.banner { width: 1046px; height: 85px; margin-left: 17px; border-radius: 42px; background: #fbede5; display: flex; align-items: center; padding-left: 27px; font-size: 37px; font-weight: 300; color: #c96331; }
.banner svg { width: 44px; height: 40px; margin-right: 50px; }
.banner span { margin-top: -3px; }
.banner i { width: 1.500px; height: 34px; background: #d0632f; margin-left: 115px; }
.banner svg.bx { width: 32px; height: 30px; margin: 0 0 0 14px; }

.sections { margin-top: 15px; border-top: 2px solid #d8d8d8; height: 47px; overflow: hidden; display: flex; gap: 69px; padding: 19px 0 0 63px; font-size: 38px; line-height: 56px; font-weight: 300; color: #555; }
.hot { color: #cb6433; }
.dock { height: 128px; border-top: 2px solid #d8d8d8; background: #f6f7fa; display: flex; padding-left: 42px; color: #55585c; font-weight: 300; }
.index { width: 216px; display: flex; flex-direction: column; color: #c8473f; font-size: 34.500px; }
.index i { margin: 7px 0 0 78px; width: 0; border: 9.500px solid transparent; border-top: 0; border-bottom: 8px solid #707070; }
.index span { margin: 9px 0 0 25px; line-height: 42px; }
.index p { margin: 0 0 0 -1px; display: flex; line-height: 42px; font-size: 29px; }
.index em { color: #55585c; margin-right: 62px; }
.index b { font-size: 32px; line-height: 45px; }
.act { width: 205.500px; display: flex; flex-direction: column; align-items: center; font-size: 28.500px; line-height: 40px; }
.act svg { width: 64px; height: 62px; margin: 5px 0 11px; fill: none; stroke: #606266; stroke-width: 2.600; stroke-linecap: round; stroke-linejoin: round; }
.sysnav { height: 126px; display: flex; padding: 36px 0 0 204px; }
.sysnav svg { height: 48px; fill: none; stroke: #8a8a8a; stroke-width: 5.500; stroke-linecap: round; stroke-linejoin: round; }
.sysnav svg:nth-child(1) { width: 52px; margin-right: 255px; }
.sysnav svg:nth-child(2) { width: 60px; margin-right: 253px; }
.sysnav svg:nth-child(3) { width: 52px; }
</style>
